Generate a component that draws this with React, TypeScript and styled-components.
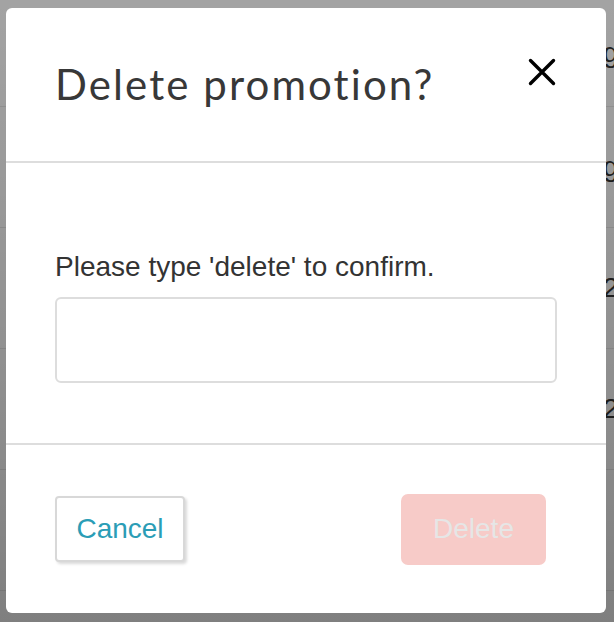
import React from "react";
import styled, { createGlobalStyle } from "styled-components";

const GlobalStyle = createGlobalStyle`
  html, body {
    margin: 0;
    padding: 0;
    background: #ffffff;
    overflow: hidden;
  }
  * {
    box-sizing: border-box;
  }
`;

const rows = ["gift card", "gift card", "2021-04-02", "2021-04-02", ""];

export default function App() {
  return (
    <>
      <GlobalStyle />
      <Page>
        <Table>
          {rows.map((text, i) => (
            <Row key={i} first={i === 0}>
              <Cell>{text}</Cell>
            </Row>
          ))}
        </Table>
        <Backdrop>
          <Modal role="dialog" aria-labelledby="modal-title">
            <Header>
              <Title id="modal-title">Delete promotion?</Title>
              <CloseButton aria-label="Close">
                <svg width="28" height="28" viewBox="0 0 28 28" fill="none">
                  <path
                    d="M2.5 2.5L25.5 25.5M25.5 2.5L2.5 25.5"
                    stroke="#000"
                    strokeWidth="3.4"
                    strokeLinecap="round"
                  />
                </svg>
              </CloseButton>
            </Header>
            <Body>
              <Label htmlFor="confirm">Please type 'delete' to confirm.</Label>
              <Input id="confirm" type="text" />
            </Body>
            <Footer>
              <CancelButton>Cancel</CancelButton>
              <DeleteButton disabled>Delete</DeleteButton>
            </Footer>
          </Modal>
        </Backdrop>
      </Page>
    </>
  );
}

const Page = styled.div`
  position: relative;
  width: 100vw;
  height: 100vh;
  overflow: hidden;
  font-family: "Liberation Sans", Arial, sans-serif;
`;

const Table = styled.div`
  display: flex;
  flex-direction: column;
`;

const Row = styled.div<{ first?: boolean }>`
  display: flex;
  align-items: center;
  height: ${(p) => (p.first ? "107px" : "121px")};
  border-bottom: 1px solid #e8e8e8;
  padding-left: 603px;
  white-space: nowrap;
`;

const Cell = styled.span`
  font-size: 28px;
  color: #333;
`;

const Backdrop = styled.div`
  position: absolute;
  inset: 0;
  background: linear-gradient(
    to bottom,
    rgba(0, 0, 0, 0.36) 0%,
    rgba(0, 0, 0, 0.44) 60%,
    rgba(0, 0, 0, 0.5) 100%
  );
`;

const Modal = styled.div`
  position: absolute;
  left: 6px;
  top: 8px;
  width: 600px;
  height: 605px;
  display: flex;
  flex-direction: column;
  background: #ffffff;
  border-radius: 6px;
  overflow: hidden;
`;

const Header = styled.div`
  display: flex;
  justify-content: space-between;
  align-items: flex-start;
  height: 155px;
  padding: 50px 50px 0 49px;
  border-bottom: 2px solid #dddddd;
`;

const Title = styled.h2`
  margin: 1px 0 0;
  font-family: Lato, "Noto Sans", sans-serif;
  font-weight: 400;
  font-size: 42px;
  line-height: 50px;
  color: #383838;
  letter-spacing: 2.1px;
`;

const CloseButton = styled.button`
  display: flex;
  align-items: center;
  justify-content: center;
  width: 28px;
  height: 28px;
  padding: 0;
  border: none;
  background: none;
  cursor: pointer;
`;

const Body = styled.div`
  display: flex;
  flex-direction: column;
  padding: 88px 49px 60px 49px;
  border-bottom: 2px solid #dddddd;
`;

const Label = styled.label`
  font-size: 28px;
  line-height: 32px;
  color: #333333;
`;

const Input = styled.input`
  margin-top: 14px;
  height: 86px;
  width: 100%;
  border: 2px solid #dddddd;
  border-radius: 6px;
  outline: none;
  background: #fff;
  font-family: inherit;
  font-size: 28px;
  padding: 0 16px;
`;

const Footer = styled.div`
  flex: 1;
  display: flex;
  justify-content: space-between;
  align-items: center;
  padding: 0 60px 0 49px;
`;

const BaseButton = styled.button`
  font-family: "Liberation Sans", Arial, sans-serif;
  font-size: 28px;
  line-height: 32px;
  cursor: pointer;
`;

const CancelButton = styled(BaseButton)`
  width: 130px;
  height: 66px;
  background: #ffffff;
  color: #2b9db6;
  border: 2px solid #d8d8d8;
  border-radius: 4px;
  box-shadow: 2px 2px 3px rgba(0, 0, 0, 0.15);
`;

const DeleteButton = styled(BaseButton)`
  width: 145px;
  height: 71px;
  background: #f7cbc8;
  color: #e6e6e6;
  border: none;
  border-radius: 7px;
  cursor: not-allowed;
`;
